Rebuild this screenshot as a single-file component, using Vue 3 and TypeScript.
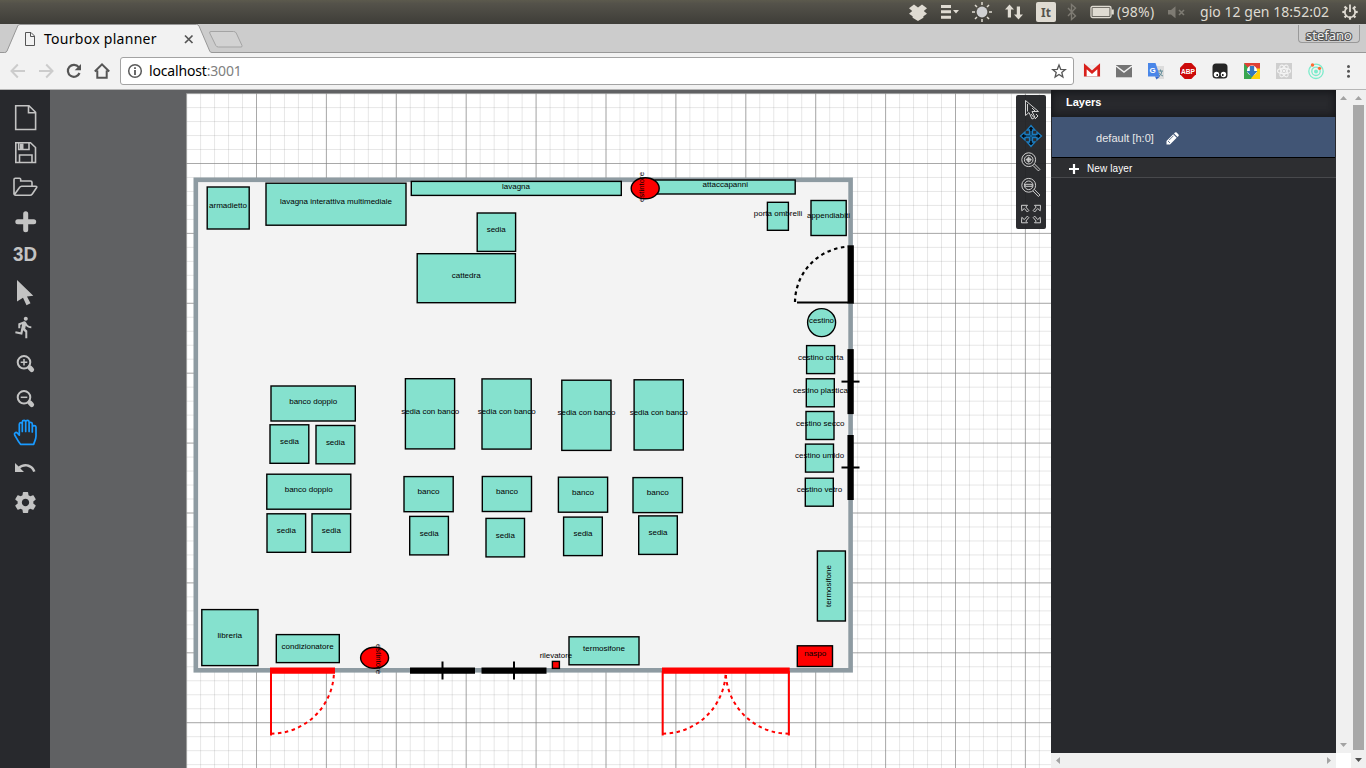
<script setup lang="ts">
interface Item {
  x: number
  y: number
  w: number
  h: number
  label: string
  tx: number
  ty: number
  tw: number
}

const pitch = 69.9
const gridX = 186.6
const gridY = 93.6
const columns: number[] = Array.from({ length: 62 }, (_, i) => i)
const rows: number[] = Array.from({ length: 49 }, (_, i) => i)

const items: Item[] = [
  { x: 207.2, y: 187, w: 42, h: 42, label: 'armadietto', tx: 228, ty: 207.7, tw: 38 },
  { x: 266, y: 183.2, w: 140, h: 42, label: 'lavagna interattiva multimediale', tx: 336, ty: 204, tw: 112 },
  { x: 411.3, y: 181.4, w: 210, h: 14, label: 'lavagna', tx: 516, ty: 188.9, tw: 28 },
  { x: 655, y: 180, w: 140.2, h: 14, label: 'attaccapanni', tx: 725.3, ty: 186.9, tw: 45.5 },
  { x: 477.2, y: 213, w: 38.4, h: 38.4, label: 'sedia', tx: 496.2, ty: 232, tw: 19 },
  { x: 417.2, y: 253.7, w: 98.2, h: 49, label: 'cattedra', tx: 466.2, ty: 277.8, tw: 29 },
  { x: 767.4, y: 202.3, w: 21, h: 28, label: 'porta ombrelli', tx: 778, ty: 215.7, tw: 48.5 },
  { x: 811, y: 200.5, w: 35.2, h: 35, label: 'appendiabiti', tx: 828.5, ty: 218, tw: 43 },
  { x: 806.6, y: 345.6, w: 28, h: 28, label: 'cestino carta', tx: 820.7, ty: 360, tw: 45.5 },
  { x: 806.3, y: 378.8, w: 28, h: 28, label: 'cestino plastica', tx: 820.4, ty: 393, tw: 55 },
  { x: 806, y: 411.5, w: 28, h: 28, label: 'cestino secco', tx: 820.2, ty: 426, tw: 48.5 },
  { x: 805.5, y: 444.1, w: 28, h: 28, label: 'cestino umido', tx: 819.6, ty: 458.1, tw: 49 },
  { x: 805.3, y: 478.2, w: 28, h: 28, label: 'cestino vetro', tx: 819.5, ty: 492, tw: 45.5 },
  { x: 271, y: 386, w: 84.3, h: 35, label: 'banco doppio', tx: 313.2, ty: 404, tw: 48 },
  { x: 270, y: 424.8, w: 38.8, h: 38.5, label: 'sedia', tx: 289.5, ty: 444, tw: 19 },
  { x: 316, y: 425.5, w: 38.8, h: 38.3, label: 'sedia', tx: 335.4, ty: 445, tw: 19 },
  { x: 266.8, y: 474.2, w: 84, h: 35, label: 'banco doppio', tx: 308.7, ty: 492, tw: 48 },
  { x: 267, y: 513.8, w: 38.6, h: 38.5, label: 'sedia', tx: 286.3, ty: 533, tw: 19 },
  { x: 312, y: 513.8, w: 38.6, h: 38.5, label: 'sedia', tx: 331.3, ty: 533, tw: 19 },
  { x: 405.4, y: 378.7, w: 49.2, h: 70.2, label: 'sedia con banco', tx: 430.2, ty: 414, tw: 58 },
  { x: 482, y: 378.9, w: 49.2, h: 70.2, label: 'sedia con banco', tx: 506.7, ty: 414, tw: 58 },
  { x: 561.8, y: 380.2, w: 49.2, h: 70.2, label: 'sedia con banco', tx: 586.5, ty: 415, tw: 58 },
  { x: 634.1, y: 379.8, w: 49.2, h: 70.2, label: 'sedia con banco', tx: 658.7, ty: 415, tw: 58 },
  { x: 404, y: 476.6, w: 49.2, h: 35.1, label: 'banco', tx: 428.5, ty: 494, tw: 22 },
  { x: 482.3, y: 476.5, w: 49.2, h: 35, label: 'banco', tx: 507, ty: 494, tw: 22 },
  { x: 558.4, y: 477.2, w: 49.2, h: 35, label: 'banco', tx: 583, ty: 495, tw: 22 },
  { x: 633, y: 477.6, w: 49.4, h: 35, label: 'banco', tx: 657.7, ty: 495, tw: 22 },
  { x: 409.7, y: 516.4, w: 38.7, h: 38.5, label: 'sedia', tx: 429.2, ty: 536, tw: 19 },
  { x: 486, y: 518.4, w: 38.5, h: 38.5, label: 'sedia', tx: 505.3, ty: 538, tw: 19 },
  { x: 563.6, y: 517.1, w: 38.7, h: 38.5, label: 'sedia', tx: 583, ty: 536, tw: 19 },
  { x: 638.7, y: 515.9, w: 38.6, h: 38.5, label: 'sedia', tx: 658, ty: 535, tw: 19 },
  { x: 201.8, y: 609.6, w: 56.2, h: 56, label: 'libreria', tx: 229.8, ty: 638, tw: 24.5 },
  { x: 276.3, y: 634.6, w: 63, h: 28, label: 'condizionatore', tx: 307.6, ty: 649, tw: 52 },
  { x: 569, y: 636.8, w: 70, h: 28, label: 'termosifone', tx: 604, ty: 651, tw: 42 },
]

const windowsBottom: number[] = [442.5, 514]
const windowsRight: number[] = [381.6, 467.5]
const rays: number[] = [0, 45, 90, 135, 180, 225, 270, 315]
</script>

<template>
  <div class="screen">
    <header class="sysbar">
      <svg class="sys-icons" width="208" height="24" viewBox="908 0 208 24">
        <g fill="#dfdbd2">
          <path d="M909 8.200l5-3.700 4 3 4-3 5 3.700-3.200 2.800 3.200 2.800-3.600 2.500v1.500L918 21l-5.400-3.200v-1.500l-3.600-2.500 3.200-2.800z" />
          <path d="M941 5h10v3h-10zM941 10.300h10v3h-10zM941 15.700h10v3h-10zM953 10h6l-3 3.500z" />
          <path d="M1005 9.500l4.500-5 4.500 5h-3v8h-3.200v-8zM1014 14.500l4.500 5 4.500-5h-3v-8h-3.200v8z" />
          <rect x="1036" y="2" width="20" height="20" rx="2" />
        </g>
        <circle cx="982" cy="12" r="5.400" fill="#cfd0d2" />
        <path d="M982 2v3M982 19v3M972 12h3M989 12h3M975 5l2 2M987 17l2 2M975 19l2-2M987 7l2-2" stroke="#dfdbd2" stroke-width="1.500" />
        <text x="1046" y="17" text-anchor="middle" class="kbd">It</text>
        <path d="M1068 8l7.500 8-4 3.500V4.500l4 3.500-7.500 8" fill="none" stroke="#7e7b73" stroke-width="1.400" />
        <rect x="1091" y="6.500" width="20" height="11" rx="1.500" fill="none" stroke="#dfdbd2" stroke-width="1.300" />
        <rect x="1092.500" y="8" width="17" height="8" fill="#dfdbd2" />
        <rect x="1111.500" y="9.500" width="2.300" height="5" fill="#dfdbd2" />
      </svg>
      <span class="battery">(98%)</span>
      <svg class="mute" width="20" height="24" viewBox="1167 0 20 24">
        <path d="M1168 10h3l4.500-3.800v12L1171 14.500h-3z" fill="#7e7b73" />
        <path d="M1179 10l5 5M1184 10l-5 5" stroke="#7e7b73" stroke-width="1.600" />
      </svg>
      <span class="clock">gio 12 gen 18:52:02</span>
      <svg class="power" width="18" height="24" viewBox="0 0 18 24">
        <path v-for="a in rays.filter((r) => r !== 0)" :key="a" d="M9 7.500V4.300" :transform="`rotate(${a} 9 12)`" stroke="#dfdbd2" stroke-width="2.200" />
        <path d="M6.200 7.700A5.200 5.200 0 1 0 11.800 7.700" fill="none" stroke="#dfdbd2" stroke-width="1.700" />
        <path d="M9 4.500v7.500" stroke="#dfdbd2" stroke-width="1.800" />
      </svg>
    </header>

    <div class="tabs">
      <svg class="tab-shape" width="250" height="29" viewBox="0 24 250 29">
        <path d="M0 52.500H4.500Q6.300 52.500 7 51L17.700 26Q18.300 24.500 20 24.500H196.500Q198.300 24.500 199 26L209.700 51Q210.300 52.500 212 52.500V54H0z" fill="#f2f2f2" />
        <path d="M0 24H18.500L6.500 52.500H0z" fill="#ccc" />
        <path d="M0 52.500H4.500Q6.300 52.500 7 51L17.700 26Q18.300 24.500 20 24.500H196.500Q198.300 24.500 199 26L209.700 51Q210.300 52.500 212 52.500H250" fill="none" stroke="#989898" />
        <path d="M211 31.500H233.500Q235.500 31.500 236.200 33L242 45.500Q242.500 47 241 47H218.500Q216.500 47 215.800 45.500L209.700 33Q209.200 31.500 211 31.500z" fill="#d2d2d2" stroke="#a4a4a4" />
        <path d="M25.500 32.500H31L34.500 36V45.500H25.500zM30.500 32.500V36.500H34.500" fill="none" stroke="#555" />
        <path d="M185 35.500L192.500 43M192.500 35.500L185 43" stroke="#555" stroke-width="1.700" />
      </svg>
      <span class="tab-title">Tourbox planner</span>
      <span class="user">stefano</span>
    </div>

    <div class="toolbar">
      <svg class="nav" width="120" height="36" viewBox="0 53 120 36">
        <g fill="none" stroke="#ccc" stroke-width="2">
          <path d="M25 71H12M17.800 64.500L11.500 71L17.800 77.500" />
          <path d="M39 71H52M46.200 64.500L52.500 71L46.200 77.500" />
        </g>
        <path d="M78.700 67.200A6 6 0 1 0 79.500 73" fill="none" stroke="#555" stroke-width="2.200" />
        <path d="M81 64v6.300h-6.300z" fill="#555" />
        <path d="M94.800 71.500L102 64.300L109.200 71.500M97.300 70.500V77.700H106.700V70.500" fill="none" stroke="#555" stroke-width="2" />
      </svg>
      <div class="omnibox">
        <svg width="16" height="16" viewBox="0 0 16 16">
          <circle cx="8" cy="8" r="6.300" fill="none" stroke="#5a5a5a" stroke-width="1.500" />
          <path d="M7.100 4.300h1.800v1.800H7.100zM7.100 7.100h1.800v4.800H7.100z" fill="#5a5a5a" />
        </svg>
        <span class="url">localhost<span class="port">:3001</span></span>
        <svg class="star" width="16" height="16" viewBox="0 0 16 16">
          <path d="M8 2l1.700 4.300 4.600.3-3.500 2.900 1.100 4.500L8 11.500 4.100 14l1.100-4.500L1.700 6.600l4.600-.3z" fill="none" stroke="#555" stroke-width="1.300" />
        </svg>
      </div>
      <svg class="exts" width="290" height="36" viewBox="1076 53 290 36">
        <rect x="1084" y="65" width="16" height="12" rx="1" fill="#fff" />
        <path d="M1084.500 65h15v1.500l-7.500 6-7.500-6z" fill="#ececec" />
        <path d="M1085.300 77V66.300l6.700 6 6.700-6V77" fill="none" stroke="#d9201b" stroke-width="2.700" />
        <path d="M1084 76.500h16" stroke="#d6a5a3" stroke-width=".8" />
        <rect x="1116" y="65" width="16" height="12.300" fill="#747474" />
        <path d="M1116 66l8 6 8-6" fill="none" stroke="#f2f2f2" stroke-width="1.500" />
        <path d="M1154 66h10v13h-6z" fill="#dcdcdc" />
        <path d="M1148 63h7.500l4.500 13.500h-12z" fill="#4a86e8" />
        <path d="M1155 76.500h5l-3.500 3z" fill="#3367c8" />
        <text x="1149.500" y="73" class="translate">G</text>
        <path d="M1158 71h5M1160.500 69.500v2M1162 71q-.5 4-3 5M1159 72.500q1 2.500 4 3.500" stroke="#668f9a" fill="none" />
        <path d="M1184.700 63h6.600l4.700 4.700v6.600l-4.700 4.700h-6.600l-4.700-4.700v-6.600z" fill="#cc0a0a" />
        <text x="1181" y="74" textLength="14" lengthAdjust="spacingAndGlyphs" class="abp">ABP</text>
        <rect x="1212.500" y="63.500" width="15" height="15" rx="3.500" fill="#252525" />
        <circle cx="1216.500" cy="74.500" r="2.700" fill="#fff" />
        <circle cx="1223.500" cy="74.500" r="2.700" fill="#fff" />
        <circle cx="1217.200" cy="75" r=".9" /><circle cx="1222.800" cy="75" r=".9" />
        <path d="M1244 63h16v6h-10l-2 3z" fill="#df4135" />
        <path d="M1244 63.500V79h8l2-5z" fill="#39a650" />
        <path d="M1260 68.500V79h-9l5-10.500z" fill="#ffd20a" />
        <circle cx="1252" cy="70.500" r="5" fill="#fff" />
        <path d="M1249.800 66h4.400v5h3.300l-5.500 6-5.500-6h3.300z" fill="#3478bd" />
        <rect x="1276" y="63" width="16" height="16" fill="#cfcfcf" />
        <g fill="none" stroke="#f3f3f3" stroke-width="1.100">
          <ellipse cx="1284" cy="71" rx="6.500" ry="2.600" />
          <ellipse cx="1284" cy="71" rx="6.500" ry="2.600" transform="rotate(60 1284 71)" />
          <ellipse cx="1284" cy="71" rx="6.500" ry="2.600" transform="rotate(120 1284 71)" />
        </g>
        <circle cx="1284" cy="71" r="1.300" fill="#f3f3f3" />
        <g fill="none" stroke="#7ceccb" stroke-width="1.300">
          <circle cx="1316" cy="71.300" r="7.200" /><circle cx="1316" cy="71.300" r="4.200" />
        </g>
        <circle cx="1316" cy="71.500" r="2" fill="#7ceccb" />
        <circle cx="1312.500" cy="65" r="1.700" fill="#ff6b35" /><circle cx="1319.500" cy="68.300" r="1.600" fill="#ff6b35" />
        <g fill="#555"><circle cx="1348.500" cy="66.400" r="1.500" /><circle cx="1348.500" cy="71.300" r="1.500" /><circle cx="1348.500" cy="76.300" r="1.500" /></g>
      </svg>
    </div>

    <main class="workspace">
      <nav class="side">
        <svg class="tool" viewBox="0 0 50 35"><path d="M15.700 5.700H29L35.600 12.300V29.500H15.700zM28.500 6V12.700H35.500" class="line" /></svg>
        <svg class="tool" viewBox="0 0 50 35"><path d="M15.800 7.700H30.500L35.500 12.500V27.500H15.800zM18.700 8V14.500H29V8M19.500 27.500V20H32V27.500" class="line" /><path d="M20 8.500h3.500v5.500H20z" class="solid" /></svg>
        <svg class="tool" viewBox="0 0 50 35"><path d="M14 23V9.500Q14 8.200 15.300 8.200H19.500Q20.700 8.200 20.700 9.500V11H30.500Q32 11 32 12.500V16M14.500 24.500L19.500 17.500Q20.300 16.200 21.700 16.200H35.500Q37.500 16.200 36.500 17.800L32.300 24Q31.400 25.300 30 25.300H16Q13.500 25.300 14 22.500" class="line" /></svg>
        <svg class="tool" viewBox="0 0 50 35"><path d="M25.700 8.800V24.700M17.800 16.700H33.700" fill="none" stroke="#c3c3c3" stroke-width="5" stroke-linecap="round" /></svg>
        <svg class="tool" viewBox="0 0 50 35"><text x="13" y="21" textLength="24" lengthAdjust="spacingAndGlyphs" class="three">3D</text></svg>
        <svg class="tool" viewBox="0 0 50 35"><path d="M17 5L33.300 20.800L27 21.500L30.500 28.300L26.500 30.200L23 22.800L17 26.500z" class="solid" /></svg>
        <svg class="tool" viewBox="0 0 50 35"><path transform="translate(12.300 5.300)" d="M13.490 5.480c1.100 0 2-.9 2-2s-.9-2-2-2-2 .9-2 2 .9 2 2 2zm-3.600 13.900l1-4.400 2.100 2v6h2v-7.500l-2.100-2 .6-3c1.300 1.500 3.300 2.500 5.500 2.500v-2c-1.900 0-3.500-1-4.300-2.400l-1-1.600c-.4-.6-1-1-1.700-1-.3 0-.5.1-.8.1l-5.200 2.200v4.700h2v-3.400l1.800-.7-1.600 8.100-4.900-1-.4 2 7 1.400z" class="solid" /></svg>
        <svg class="tool" viewBox="0 0 50 35"><circle cx="24" cy="17.300" r="6.300" class="ring" /><path d="M24 14v6.600M20.700 17.300h6.600" stroke="#c3c3c3" stroke-width="1.500" /><path d="M29.800 22.700L31.700 24.700" class="grip" /></svg>
        <svg class="tool" viewBox="0 0 50 35"><circle cx="24" cy="17.300" r="6.300" class="ring" /><path d="M20.700 17.300h6.600" stroke="#c3c3c3" stroke-width="1.500" /><path d="M29.800 22.700L31.700 24.700" class="grip" /></svg>
        <svg class="tool" viewBox="0 0 50 35"><path d="M20.500 29.300C17.500 25.500 16 22 14.700 20C13.800 18.300 15.800 16.700 17.300 18L19.300 20.200V9.200C19.300 7 22.200 7 22.300 9.200V16.500V7C22.400 4.800 25.700 4.800 25.700 7V16.500V7C25.800 4.900 29.100 4.900 29.100 7V16.500V8.700C29.200 6.700 32.300 6.900 32.300 9V17V11.800C32.500 10.100 35.800 10.200 36 12V21C36 24.500 34.500 26 33.700 29.300z" fill="none" stroke="#199aff" stroke-width="1.700" stroke-linejoin="round" /></svg>
        <svg class="tool" viewBox="0 0 50 35"><path transform="translate(13 6)" d="M12.500 8c-2.650 0-5.050.99-6.900 2.600L2 7v9h9l-3.620-3.620c1.390-1.160 3.160-1.880 5.120-1.880 3.540 0 6.550 2.310 7.600 5.500l2.370-.78C21.080 11.030 17.150 8 12.500 8z" class="solid" /></svg>
        <svg class="tool" viewBox="0 0 50 35"><path transform="translate(12.900 4.900) scale(1.050)" d="M19.430 12.980c.04-.32.07-.64.07-.98s-.03-.66-.07-.98l2.110-1.650c.19-.15.24-.42.12-.64l-2-3.460c-.12-.22-.39-.3-.61-.22l-2.490 1c-.52-.4-1.080-.73-1.690-.98l-.38-2.650C14.460 2.180 14.250 2 14 2h-4c-.25 0-.46.18-.49.42l-.38 2.650c-.61.25-1.170.59-1.690.98l-2.490-1c-.23-.09-.49 0-.61.22l-2 3.460c-.13.22-.07.49.12.64l2.110 1.650c-.04.32-.07.65-.07.98s.03.66.07.98l-2.110 1.650c-.19.15-.24.42-.12.64l2 3.460c.12.22.39.3.61.22l2.490-1c.52.4 1.080.73 1.690.98l.38 2.650c.03.24.24.42.49.42h4c.25 0 .46-.18.49-.42l.38-2.650c.61-.25 1.170-.59 1.690-.98l2.490 1c.23.09.49 0 .61-.22l2-3.460c.12-.22.07-.49-.12-.64l-2.110-1.650zM12 15.500c-1.930 0-3.500-1.570-3.500-3.500s1.570-3.500 3.500-3.500 3.500 1.570 3.500 3.500-1.570 3.500-3.500 3.500z" class="solid" /></svg>
      </nav>

      <div class="canvas">
        <svg class="plan" width="1001" height="678" viewBox="50 90 1001 678">
          <rect x="50" y="90" width="1001" height="678" fill="#606163" />
          <rect x="186.300" y="93.300" width="865" height="675" fill="#fff" />
          <g stroke="#808080" fill="none">
            <path v-for="i in columns" :key="'mc' + i" :d="`M${gridX + (i * pitch) / 5} 93.300V768`" stroke-opacity=".19" />
            <path v-for="i in rows" :key="'mr' + i" :d="`M186.300 ${gridY + (i * pitch) / 5}H1051`" stroke-opacity=".19" />
            <path v-for="i in 13" :key="'c' + i" :d="`M${gridX + (i - 1) * pitch} 93.300V768`" stroke-opacity=".6" />
            <path v-for="i in 10" :key="'r' + i" :d="`M186.300 ${gridY + (i - 1) * pitch}H1051`" stroke-opacity=".6" />
          </g>
          <rect x="195.800" y="179.800" width="654.800" height="490.500" fill="#f3f3f3" stroke="#8e9ba2" stroke-width="4.600" />

          <g v-for="(it, i) in items" :key="i">
            <rect :x="it.x" :y="it.y" :width="it.w" :height="it.h" class="box" />
            <text :x="it.tx - it.tw / 2" :y="it.ty" :textLength="it.tw" lengthAdjust="spacingAndGlyphs">{{ it.label }}</text>
          </g>
          <circle cx="821.600" cy="322.600" r="14" class="box" />
          <text x="809" y="323" textLength="25" lengthAdjust="spacingAndGlyphs">cestino</text>
          <rect x="817.400" y="551" width="28" height="70" class="box" />
          <text transform="translate(831 607) rotate(-90)" textLength="42" lengthAdjust="spacingAndGlyphs">termosifone</text>

          <ellipse cx="645.200" cy="188.300" rx="14" ry="10.500" class="alarm" />
          <text transform="translate(643.700 202) rotate(-90)" textLength="30" lengthAdjust="spacingAndGlyphs">estintore</text>
          <ellipse cx="374.600" cy="657.800" rx="14" ry="10.500" class="alarm" />
          <text transform="translate(375.700 644) rotate(90)" textLength="30" lengthAdjust="spacingAndGlyphs">estintore</text>
          <rect x="797.300" y="645.800" width="35.200" height="20.700" class="alarm" />
          <text x="804.300" y="656" textLength="22" lengthAdjust="spacingAndGlyphs">naspo</text>

          <g v-for="x in windowsBottom" :key="'b' + x">
            <path :d="`M${x - 32.500} 670.600h65`" stroke="#000" stroke-width="6.300" />
            <path :d="`M${x} 661.500v18`" stroke="#000" stroke-width="2" />
          </g>
          <g v-for="y in windowsRight" :key="'w' + y">
            <path :d="`M850.600 ${y - 32.500}v65`" stroke="#000" stroke-width="6.300" />
            <path :d="`M841.500 ${y}h18`" stroke="#000" stroke-width="2" />
          </g>
          <rect x="552.400" y="661.400" width="7" height="7" class="alarm" />
          <text x="539.700" y="658" textLength="32.500" lengthAdjust="spacingAndGlyphs">rilevatore</text>

          <path d="M850.700 245.300V303.700" stroke="#000" stroke-width="6.300" />
          <path d="M848 302.400H797" stroke="#000" stroke-width="2" />
          <path d="M795 302A56 56 0 0 1 848 246.700" fill="none" stroke="#000" stroke-width="2.200" stroke-dasharray="3.500 3.500" />

          <g fill="none" stroke="#f00" stroke-width="2">
            <path d="M270 670.600H335M662 670.600H789.700" stroke-width="6.300" />
            <path d="M271 671V735.500M662.700 671V735.500M788.900 671V735.500" />
            <path d="M271 733.700A63 63 0 0 0 334 671M662.700 733.700A63 63 0 0 0 725.700 671M788.900 733.700A63 63 0 0 1 725.700 671" stroke-dasharray="3.500 3.500" />
          </g>
        </svg>

        <svg class="palette" width="30" height="134" viewBox="1016 95 30 134">
          <rect x="1016" y="95" width="30" height="134" rx="2" fill="#202124" fill-opacity=".95" />
          <g fill="none" stroke="#d0d0d0" stroke-width="1">
            <path d="M1025.500 100.500V115.500L1029 112.500L1032 119L1035 117.500L1032 111.500H1038.500zM1027.500 104V111.500M1032 108l3 3M1031 114l3 3.500M1036 114l2 2-3 3" />
            <g transform="translate(1028.700 159.700)">
              <circle r="6.900" /><circle r="4.300" /><path d="M-3 0H3M0-3V3M-1.500-1.500h3v3h-3zM4.200 5.700l5.500 5.500 1.500-1.500-5.500-5.500" />
            </g>
            <g transform="translate(1028.700 185.300)">
              <circle r="6.900" /><circle r="4.300" /><path d="M-3.500-1h7v2h-7zM4.200 5.700l5.500 5.500 1.500-1.500-5.500-5.500" />
            </g>
            <g transform="translate(1031 213.800)">
              <path d="M-9.500-8.500h6l-1.700 1.700 3 3.500-1.500 1.500-3-3.500-2.500 2.300z" />
              <path d="M9.500-8.500h-6l1.700 1.700-3 3.500 1.500 1.500 3-3.500 2.500 2.300zM-9.500 9h6l-1.700-1.700 3-3.500-1.500-1.500-3 3.500-2.500-2.300zM9.500 9h-6l1.700-1.700-3-3.500 1.500-1.500 3 3.500 2.500-2.300z" />
            </g>
          </g>
          <path d="M1031 125.500l4 4.500h-2.500v4.500h4.500v-2.500l4.500 4-4.500 4v-2.500h-4.500v4.500h2.500l-4 4.500-4-4.500h2.500v-4.500h-4.500v2.500l-4.500-4 4.500-4v2.500h4.500v-4.500h-2.500z" fill="#030a10" stroke="#1b7cc0" stroke-width="1.300" />
          <path d="M1031 131v10M1026 136h10" stroke="#1b7cc0" />
        </svg>
      </div>

      <section class="panel-wrap">
        <div class="panel">
          <h2 class="panel-title">Layers</h2>
          <div class="layer">
            <span>default [h:0]</span>
            <svg width="13" height="13" viewBox="0 0 13 13"><path d="M.5 9L7.200 2.300l3.500 3.500L4 12.500H.5zM8 1.500L9 .5q.8-.6 1.600 0L12.500 2.400q.6.800 0 1.600l-1 1z" fill="#fff" /><path d="M2 9l2 2M3 8.200L7.500 3.700" stroke="#415575" stroke-width=".8" /></svg>
          </div>
          <div class="new-layer">
            <svg width="10" height="10" viewBox="0 0 10 10"><path d="M5 0v10M0 5h10" stroke="#fff" stroke-width="2.200" /></svg>
            <span>New layer</span>
          </div>
        </div>
        <div class="hscroll">
          <svg width="285" height="15" viewBox="0 0 285 15"><path d="M9 4v7L5 7.500zM276 4v7l4-3.500z" fill="#a3a3a3" /></svg>
        </div>
      </section>

      <div class="inner-scroll">
        <svg width="15" height="663" viewBox="0 0 15 663"><path d="M4 10h7L7.500 6zM4 653h7l-3.500 4z" fill="#a3a3a3" /></svg>
      </div>
      <div class="outer-scroll">
        <svg width="15" height="15" viewBox="0 0 15 15"><path d="M4 10h7L7.500 6z" fill="#a3a3a3" /></svg>
        <div class="thumb"></div>
        <svg width="15" height="18" viewBox="0 0 15 18"><path d="M4 8h7l-3.500 4z" fill="#505050" /></svg>
      </div>
    </main>
  </div>
</template>

<style>
body {
  margin: 0;
  overflow: hidden;
}
</style>

<style scoped>
.screen {
  width: 1366px;
  height: 768px;
  display: flex;
  flex-direction: column;
  overflow: hidden;
  font-family: "Liberation Sans", sans-serif;
}
svg {
  display: block;
  flex: none;
}
.sysbar {
  height: 24px;
  flex: none;
  display: flex;
  align-items: center;
  padding-left: 908px;
  background: linear-gradient(#5c5a4d, #54524a 15%, #3e3d38);
  color: #dfdbd2;
  font: 14px/24px "Noto Sans", sans-serif;
  white-space: nowrap;
}
.battery {
  width: 51px;
  padding-left: 1px;
  letter-spacing: 0.3px;
  box-sizing: border-box;
}
.mute {
  margin-right: 13px;
}
.clock {
  width: 141px;
  letter-spacing: 0.04px;
}
.kbd {
  font: bold 12px "Noto Sans", sans-serif;
  fill: #55534b;
}
.tabs {
  height: 29px;
  flex: none;
  display: flex;
  background: #ccc;
  box-shadow: inset 0 -1px #989898;
  position: relative;
}
.tab-title {
  position: absolute;
  left: 44px;
  top: 5px;
  font: 14px/20px "Noto Sans", sans-serif;
  letter-spacing: 0.28px;
  color: #000;
}
.user {
  box-sizing: border-box;
  width: 62px;
  height: 18px;
  margin: 1px 6px 0 auto;
  border: 1px solid #999;
  border-top: 0;
  border-radius: 0 0 4px 4px;
  text-align: center;
  font: 13px/20px "Noto Sans", sans-serif;
  color: #eee;
  -webkit-text-stroke: 2.2px #555;
  paint-order: stroke fill;
}
.toolbar {
  box-sizing: border-box;
  height: 37px;
  flex: none;
  display: flex;
  align-items: center;
  background: #f2f2f2;
  border-bottom: 1px solid #b6b6b6;
}
.omnibox {
  box-sizing: border-box;
  width: 954px;
  height: 28px;
  display: flex;
  align-items: center;
  padding: 0 6px;
  border: 1px solid #a3a3a3;
  border-radius: 3px;
  background: #fff;
}
.url {
  margin-left: 6px;
  font: 14px/24px "Noto Sans", sans-serif;
  letter-spacing: -0.17px;
  color: #000;
}
.port {
  color: #808080;
}
.star {
  margin-left: auto;
}
.exts {
  margin-left: 2px;
}
.translate {
  font: bold 8px "Liberation Sans", sans-serif;
  fill: #fff;
}
.abp {
  font: bold 8px "Liberation Sans", sans-serif;
  fill: #fff;
}
.workspace {
  height: 678px;
  flex: none;
  display: flex;
}
.side {
  box-sizing: border-box;
  width: 50px;
  padding-top: 10px;
  background: #28292d;
}
.tool {
  width: 50px;
  height: 35px;
}
.line {
  fill: none;
  stroke: #c3c3c3;
  stroke-width: 1.6;
}
.solid {
  fill: #c3c3c3;
}
.ring {
  fill: none;
  stroke: #c3c3c3;
  stroke-width: 2;
}
.grip {
  stroke: #c3c3c3;
  stroke-width: 4.8;
  stroke-linecap: round;
}
.three {
  font: bold 20px "Liberation Sans", sans-serif;
  fill: #c3c3c3;
}
.canvas {
  width: 1001px;
  position: relative;
}
.plan text {
  font: 8px "Liberation Sans", sans-serif;
  fill: #000;
}
.box {
  fill: #85e1ce;
  stroke: #000;
  stroke-width: 1.4;
}
.alarm {
  fill: #f00;
  stroke: #000;
  stroke-width: 1.4;
}
.palette {
  position: absolute;
  left: 966px;
  top: 5px;
}
.panel-wrap {
  width: 285px;
}
.panel {
  height: 663px;
  background: #28292d;
  color: #fff;
}
.panel-title {
  box-sizing: border-box;
  height: 27px;
  margin: 0;
  padding-left: 15px;
  font: bold 11px/25px "Liberation Sans", sans-serif;
  box-shadow: inset 0 2px 8px #151619, inset 0 -3px 6px #202125;
}
.layer {
  box-sizing: border-box;
  height: 41px;
  margin: 0 1px;
  padding: 2px 0 0 44px;
  display: flex;
  align-items: center;
  gap: 12px;
  background: #415575;
  border-bottom: 1px solid #000;
  font-size: 11px;
  letter-spacing: 0.03px;
  color: #e8e8e8;
}
.new-layer {
  box-sizing: border-box;
  height: 20px;
  padding: 2px 0 0 18px;
  display: flex;
  align-items: center;
  gap: 8px;
  background: #2d2e31;
  border-bottom: 1px solid #48494c;
  font-size: 10px;
  letter-spacing: 0.1px;
}
.hscroll {
  height: 15px;
  background: #f0f0f0;
}
.inner-scroll {
  width: 15px;
  height: 663px;
  background: #f0f0f0;
}
.outer-scroll {
  width: 15px;
  background: #f0f0f0;
}
.thumb {
  width: 11px;
  height: 645px;
  margin-left: 2px;
  background: #a8a8a8;
}
</style>
